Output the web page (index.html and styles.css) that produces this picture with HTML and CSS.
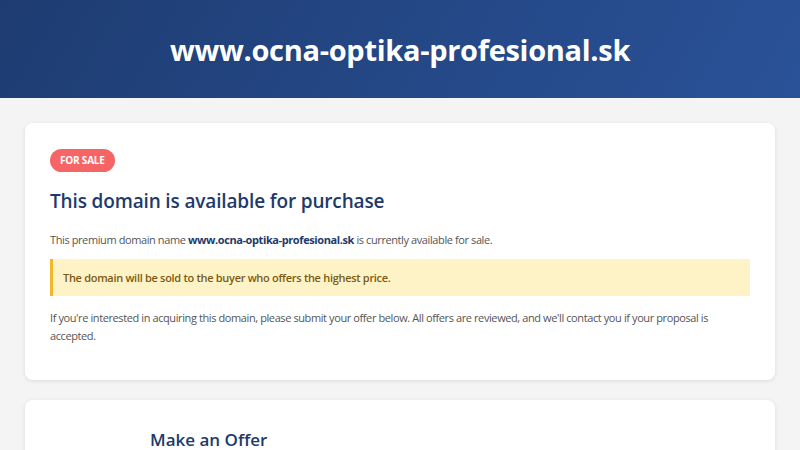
FILE: index.html
```html
<!DOCTYPE html>
<html lang="en">
<head>
<meta charset="utf-8">
<title>www.ocna-optika-profesional.sk</title>
<link rel="stylesheet" href="styles.css">
</head>
<body>
<header class="hero">
  <h1 class="hero-title">www.ocna-optika-profesional.sk</h1>
</header>
<main class="wrap">
  <section class="card">
    <span class="badge">For Sale</span>
    <h2 class="card-title">This domain is available for purchase</h2>
    <p class="text">This premium domain name <strong class="domain">www.ocna-optika-profesional.sk</strong> is currently available for sale.</p>
    <div class="notice">The domain will be sold to the buyer who offers the highest price.</div>
    <p class="text">If you're interested in acquiring this domain, please submit your offer below. All offers are reviewed, and we'll contact you if your proposal is accepted.</p>
  </section>
  <section class="card card-offer">
    <div class="offer-inner">
      <h2 class="offer-title">Make an Offer</h2>
    </div>
  </section>
</main>
</body>
</html>
```
FILE: styles.css
```css
* { box-sizing: border-box; }
html, body { margin: 0; padding: 0; }
body {
  background: #f4f4f4;
  font-family: "Open Sans", "Noto Sans", sans-serif;
  color: #555;
  overflow: hidden;
}
.hero {
  height: 98px;
  background: linear-gradient(120deg, #1e3c72 0%, #2a5298 100%);
  display: flex;
  align-items: center;
  justify-content: center;
}
.hero-title {
  margin: 0;
  color: #fff;
  font-size: 29px;
  font-weight: 700;
  letter-spacing: -0.3px;
}
.wrap {
  padding: 25px 25px 0;
  display: flex;
  flex-direction: column;
  gap: 20px;
}
.card {
  background: #fff;
  border-radius: 8px;
  box-shadow: 0 1px 4px rgba(0,0,0,0.10);
  padding: 26px 25px 35px;
}
.badge {
  display: block;
  width: fit-content;
  background: #f56565;
  color: #fff;
  font-size: 10px;
  font-weight: 700;
  text-transform: uppercase;
  letter-spacing: -0.2px;
  line-height: 13px;
  padding: 5px 10px;
  border-radius: 12px;
}
.card-title {
  margin: 16px 0 16px;
  color: #1e3a6a;
  font-size: 19px;
  font-weight: 600;
  line-height: 27px;
  letter-spacing: -0.15px;
}
.text {
  margin: 0;
  font-size: 11px;
  line-height: 18px;
  letter-spacing: -0.4px;
  color: #555;
}
.domain { color: #1e3a6a; font-weight: 700; }
.notice {
  margin: 10px 0 13px;
  background: #fef3c7;
  border-left: 3px solid #f3b72c;
  padding: 10px 10px;
  font-size: 11px;
  line-height: 17px;
  font-weight: 600;
  letter-spacing: -0.3px;
  color: #7a5a12;
}
.card-offer { padding-top: 28px; min-height: 120px; }
.offer-inner { max-width: 500px; margin: 0 auto; }
.offer-title {
  margin: 0;
  color: #1e3a6a;
  font-size: 17px;
  font-weight: 600;
  line-height: 24px;
}
```
